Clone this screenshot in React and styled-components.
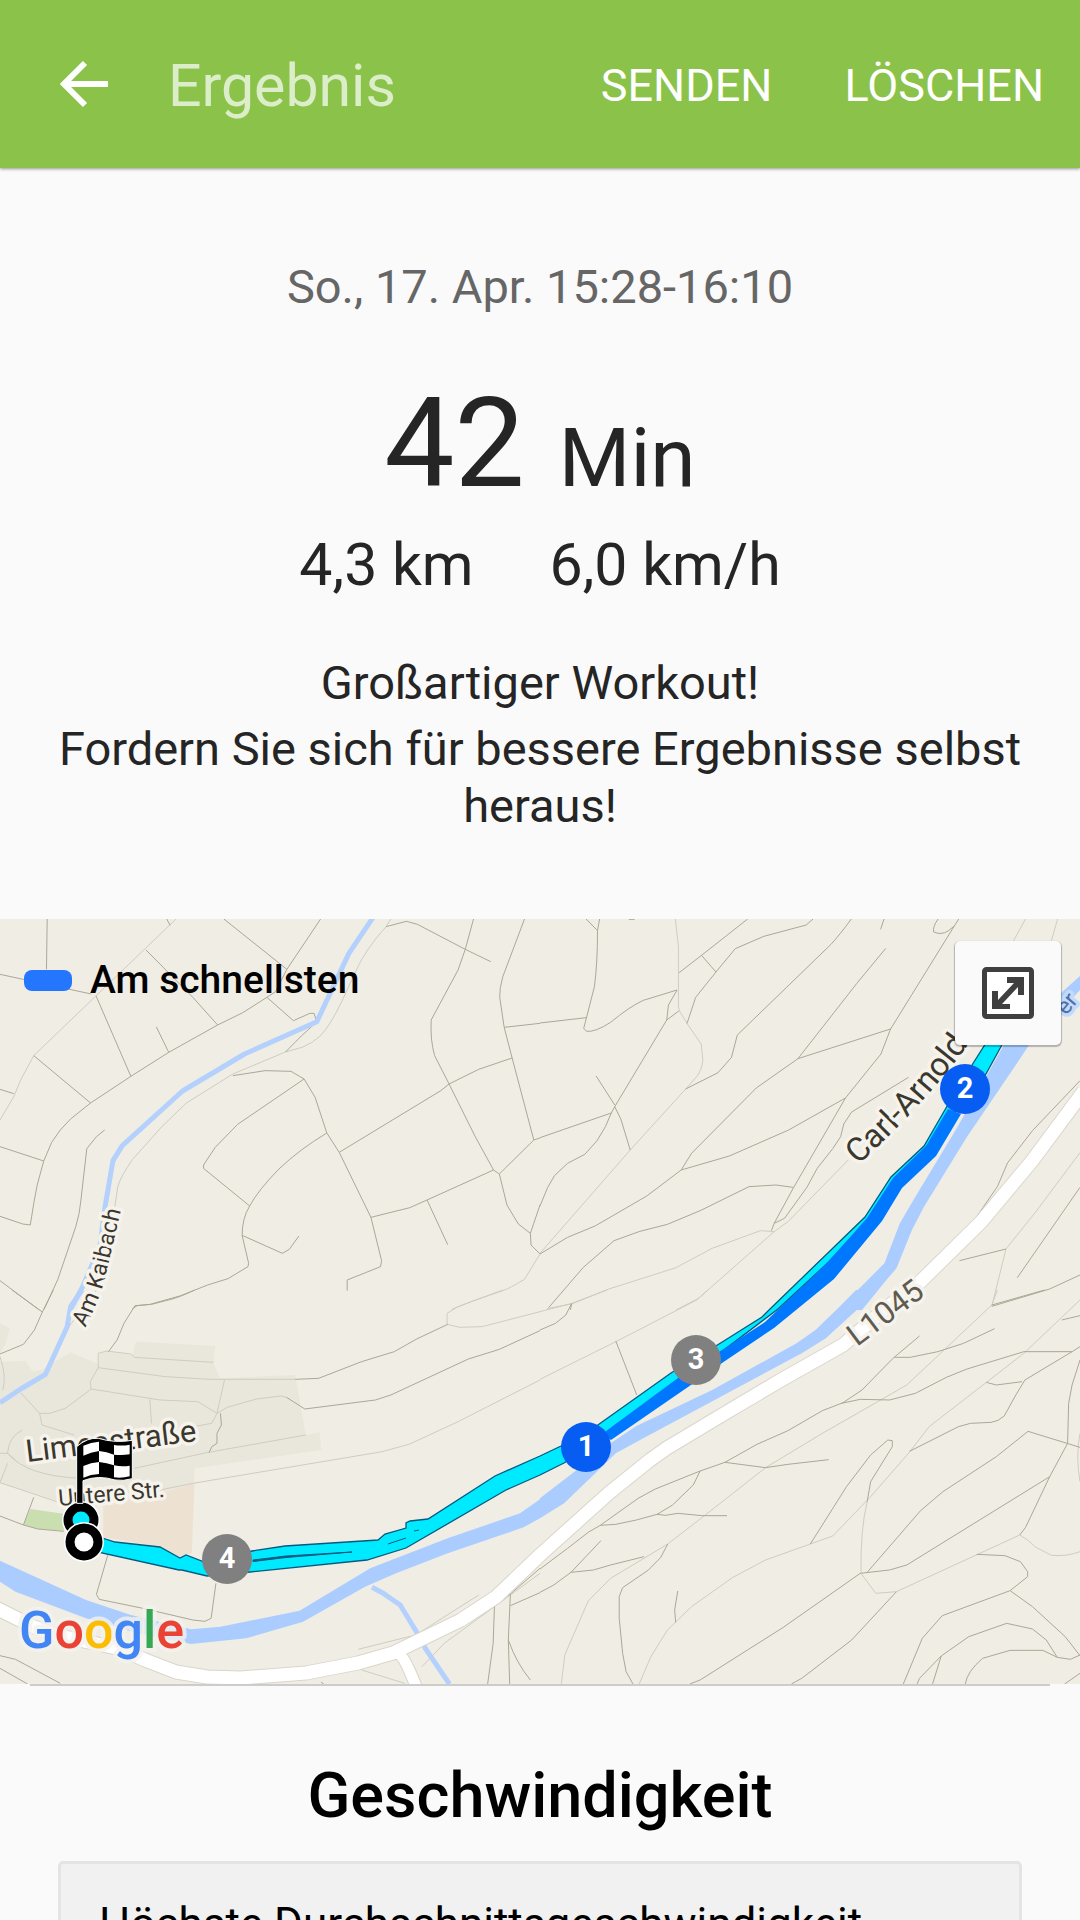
import React from "react";
import styled, { createGlobalStyle } from "styled-components";

const GlobalStyle = createGlobalStyle`
  *, *::before, *::after { box-sizing: border-box; }
  body {
    margin: 0;
    background: #fafafa;
    color: #252525;
    font-family: Roboto, "Noto Sans", sans-serif;
  }
  h1, h2, p { margin: 0; font-weight: 400; }
  button {
    border: 0;
    padding: 0;
    background: none;
    color: inherit;
    font: inherit;
    cursor: pointer;
  }
`;

const Screen = styled.div`
  display: flex;
  flex-direction: column;
  height: 100vh;
  overflow: hidden;
`;

const AppBar = styled.header`
  position: relative;
  display: flex;
  flex: none;
  align-items: center;
  height: 168px;
  padding: 4px 36px 0 56px;
  background: #8bc34a;
  color: #fff;
  box-shadow: 0 1px 3px rgba(0, 0, 0, 0.4);
`;

const BackButton = styled.button`
  display: flex;
  margin-right: 56px;
`;

const Title = styled.h1`
  flex: 1;
  font-size: 59px;
  line-height: 70px;
  color: rgba(255, 255, 255, 0.7);
`;

const Actions = styled.div`
  display: flex;
  gap: 72px;
`;

const Action = styled.button`
  font-size: 45px;
  line-height: 54px;
`;

const Summary = styled.section`
  display: flex;
  flex: none;
  flex-direction: column;
  align-items: center;
  padding: 90px 48px 85px;
  text-align: center;
`;

const WorkoutDate = styled.p`
  font-size: 47px;
  line-height: 57px;
  color: #666;
`;

const Duration = styled.p`
  display: flex;
  align-items: baseline;
  gap: 34px;
  margin-top: 55px;
  font-size: 125px;
  line-height: 148px;
`;

const Unit = styled.span`
  font-size: 82px;
  line-height: 96px;
`;

const Stats = styled.div`
  display: flex;
  gap: 76px;
  margin-top: 12px;
  font-size: 59px;
  line-height: 70px;
`;

const Message = styled.div`
  display: flex;
  flex-direction: column;
  gap: 9px;
  margin-top: 54px;
  font-size: 47px;
  line-height: 57px;
`;

const MapPanel = styled.section`
  position: relative;
  flex: none;
`;

const MapDrawing = styled.svg`
  display: block;
  width: 100%;
  height: auto;
  font-family: Roboto, "Noto Sans", sans-serif;
`;

const Legend = styled.div`
  position: absolute;
  top: 38px;
  left: 24px;
  display: flex;
  align-items: center;
  gap: 18px;
  color: #000;
  font-size: 39px;
  font-weight: 500;
  line-height: 46px;
`;

const Swatch = styled.span`
  width: 48px;
  height: 21px;
  border-radius: 8px;
  background: #2476ff;
`;

const ExpandButton = styled.button`
  position: absolute;
  top: 22px;
  right: 19px;
  display: grid;
  place-items: center;
  width: 106px;
  height: 104px;
  border-radius: 5px;
  background: #fafafa;
  box-shadow: 0 1px 1px 1px rgba(0, 0, 0, 0.25);
`;

const Divider = styled.hr`
  flex: none;
  height: 2px;
  margin: 0 30px;
  border: 0;
  background: #ccc;
`;

const SpeedSection = styled.section`
  display: flex;
  flex: 1;
  flex-direction: column;
  padding: 74px 58px 0;
  color: #000;
`;

const SectionTitle = styled.h2`
  font-size: 63px;
  font-weight: 500;
  line-height: 72px;
  text-align: center;
`;

const Card = styled.div`
  flex: none;
  margin-top: 29px;
  padding: 34px 38px;
  border: 3px solid #e4e4e4;
  border-radius: 5px;
  background: #f1f1f1;
  font-size: 44px;
  line-height: 52px;
`;

const Path = styled.path`
  fill: none;
  stroke: ${(p) => (p.$faint ? "#cfccc1" : "#aba896")};
  stroke-width: 1;
  vector-effect: non-scaling-stroke;
`;

const Stream = styled.path`
  fill: none;
  stroke: #b4d0fc;
  stroke-width: 5;
  stroke-linejoin: round;
  vector-effect: non-scaling-stroke;
`;

const MapLabel = styled.text`
  fill: ${(p) => p.$color || "#3a372f"};
  font-size: ${(p) => p.$size}px;
  paint-order: stroke;
  stroke: ${(p) => p.$halo || "#f6f3ec"};
  stroke-width: 7;
  stroke-linejoin: round;
`;

const PinLabel = styled.text`
  fill: #fff;
  font-size: 29px;
  font-weight: 700;
  text-anchor: middle;
`;

const LogoText = styled.text`
  font-size: 52px;
  font-weight: 500;
  paint-order: stroke;
  stroke: #f3f1ec;
  stroke-opacity: 0.8;
  stroke-width: 8;
  stroke-linejoin: round;
`;

const TILES = [
  {
    id: "north-west",
    at: "translate(0 -9)",
    paths:
      "M137 27L135 178M0 193L265 252M484 27L494 46M650 27L833 178M931 27L833 178L800 245L775 262L705 308L632 345L490 427L380 499L263 579L205 627L175 660L150 697L127 753L108 825L98 880L88 945L66 942L0 919M424 120L560 262L632 345M279 258L380 499M454 351L490 427M98 437L263 579M0 538L40 551M0 710L127 753M775 262L852 332L900 310L912 310L918 330M918 337L875 378L829 426M676 497L770 482L845 484L883 507L915 562L949 669L985 727L1077 922L1108 1052L1105 1070L1008 1110L1008 1142M883 507L690 643L625 712L591 765L591 775L725 888M949 669Q870 718 810 777Q750 840 725 888Q703 925 703 976L722 1060L720 1070L662 1106L603 1125L525 1157L436 1183L398 1187L384 1197M703 976L820 1030L840 1018L868 978M1121 50L1180 34L1212 43L1351 118L1425 155M1375 27L1351 118L1330 180L1252 330Q1249 390 1262 437L1304 522L1380 680L1433 780L1450 792L1550 690M1523 27L1460 200Q1450 235 1451 262L1464 352L1487 444L1550 690L1568 684M1464 352L1568 340M985 727L1280 542L1304 522L1390 478L1487 444M1077 922L1190 893L1240 870L1433 780M1240 870L1300 1004M1450 792L1472 885L1505 942L1540 970L1568 885M1540 970L1542 1005L1568 1032M304 660L280 680L252 716L235 870Q232 910 220 950L168 1108L128 1198M0 1112L114 1200",
    faint:
      "M511 27L98 437L60 510L40 560L0 630M1135 27L1121 50Q1060 120 1035 180L992 275Q960 345 930 378Q905 400 880 411L829 426L676 492L540 580L470 650L385 748Q350 800 342 830L332 900M1568 1032L1523 1108Q1480 1135 1460 1142L1375 1172L1312 1198",
    stream:
      "M1086 18L1013 130L920 335L710 432L530 543L355 707L328 752L305 890L290 1010L240 1130L205 1198",
  },
  {
    id: "north-east",
    at: "translate(540 -9)",
    paths:
      "M134 27L167 62M173 27L167 62Q167 160 158 230L127 355L135 364Q160 367 205 337Q260 290 300 271L398 240L373 285L368 330L217 590L235 628L262 720M258 28H275M0 339L134 323M368 330L403 303M163 498L217 585M0 683L207 609M217 590L207 609L190 650L165 693L130 733L80 760L42 797L22 833L0 888M603 27L469 136L404 188M469 136L511 186M793 27L773 45L650 79L567 116L511 186L452 262L427 340M904 27Q870 75 845 103L573 375L556 442L517 488L423 537M1004 115L920 220L749 446L1018 357M749 446L628 534L440 730L410 780L550 738L722 660L887 564M410 780L310 858L160 948L80 982L0 1032M999 27L989 58M1156 27Q1140 50 1143 66Q1165 76 1185 63L1203 48M1216 27L1203 48L1018 357L990 432L887 564L735 835L680 940L672 962M1070 502L905 606L882 642L873 680L850 716L805 775L775 832L710 925L680 940M735 832L685 825L607 830L465 902L370 943L290 964L215 992L125 1073L25 1193M92 1182L88 1200M1568 512L1430 662L1358 758L1328 830L1268 920M1218 1052L1353 1017M1568 832L1386 1103M1568 1095L1480 1137L1312 1189",
    faint:
      "M393 27L402 110V290L405 303L430 345L468 402L473 450Q470 480 455 500L423 537L262 720L0 1030M1410 27L1375 92M1503 27L1485 92M895 750L720 935L680 965L640 962L500 1015L395 1073L200 1137L92 1182L20 1196M680 965L570 1065L460 1165L395 1200M1568 728L1440 905L1353 1017L1312 1189",
    river:
      "M865 1200L1000 1060L1045 940L1090 860L1210 655L1350 400L1568 198V240L1420 405L1385 460L1240 680L1115 890L1080 960L1035 1075L1010 1105L935 1200Z",
  },
  {
    id: "south-west",
    at: "translate(0 371)",
    paths:
      "M35 0L123 66M155 0L123 66L100 120L68 163L0 192M565 0Q525 20 500 27L440 43L392 47L360 100L340 150L315 185M857 268L925 265L1050 215L1145 185L1210 147L1300 103M832 322L885 357L1090 330L1135 315L1360 207L1450 178L1568 122M0 678L68 705L110 717L185 724M98 622L68 705M313 795L280 913L288 928L415 955L560 990L595 994L613 985L627 880M640 370L643 405L630 430V460L615 470L607 488M0 1097L45 1108L175 1180M0 1135L80 1182M1568 835L1482 912L1436 940L1432 1060L1416 1182M1482 912L1476 1050L1480 1182M1476 1050Q1500 1120 1540 1170M1482 947L1568 908M932 1176l10 8",
    faint:
      "M1460 0L1330 50L1298 70V103L1335 112L1400 110L1568 65M0 200Q20 260 8 300M285 233V190L310 183L380 192L390 202L620 217M285 233L480 260L610 268H857M285 233L262 275L265 297L465 330L575 335L630 370L652 270M265 297L190 355L145 370H115L60 308M115 370L122 405L215 435M435 328L440 400M630 370L660 352L745 327L815 318L832 322M630 370L615 400L550 412M390 535L600 488L888 435M465 600L560 580L1110 485L1190 462L1330 395L1568 270M22 490Q25 440 65 420M0 490H22L45 510M22 520L0 578L165 635M22 490Q80 560 240 565M280 0L200 110L130 253M1390 915L1215 1030M1195 1038L1040 1078M1568 850L1290 1060L1225 1130M1050 1140L1175 1180",
    town:
      "M0 215L75 213L95 245L120 240L205 187L285 222V190L310 183L384 195L395 155L625 168L620 220L638 265L857 255L888 435L928 427L932 480L565 535L563 582L300 650L190 640L0 580ZM0 100L28 115L15 165L0 190Z",
    river:
      "M0 812L250 930L380 975L555 1018L640 1010L870 962L1075 835L1300 745L1510 670L1568 628V685L1520 712L1300 790L1150 850L1060 890L880 995L715 1045L555 1062L400 1030L250 985L45 905L0 875Z",
    stream:
      "M238 0L205 50L195 110L132 253L60 297L0 338M1080 892L1110 908L1162 945L1215 1035L1235 1075L1305 1182",
  },
  {
    id: "south-east",
    at: "translate(540 371)",
    paths:
      "M0 120L45 100L75 75L92 40M220 153L281 315M1102 138L1025 205L935 300L880 338L820 362L720 422L630 463L537 517L465 543L335 597L285 625L175 706L140 727L80 775L0 837M1030 202H1075L1155 185L1230 160L1320 116M1568 170L1545 185H1405L1240 237L1180 262L1090 310L1015 330L930 328L875 340M1545 185L1408 270L1380 318L1348 378Q1330 395 1310 397L1250 400L1215 410L1073 484M1296 277L1325 285L1400 275M1515 90L1568 77M1312 45L1465 0M537 517L655 533L720 523L838 509M465 543L445 585L385 645L340 673L280 690L220 703L175 706M340 673L365 676L400 670L470 677H543M177 752L90 847L40 885L0 907M90 847L155 840L205 825L302 800M371 762L350 803L315 840L240 893L230 920V985L240 1090L250 1145L270 1182M400 903L391 960L394 997M785 762L890 590L960 495L1010 450L1023 452V470L960 575L950 635M1568 210L1545 285L1535 340L1532 460L1480 560L1410 712L1393 735M1568 472L1417 424L1325 500L1170 605L1105 662L950 847M1480 560L1065 825L1015 840L930 850L705 1013L465 1170L435 1182M1268 793L1350 797L1395 815L1416 845V860L1365 902L1168 977L1110 1045L1055 1182M1365 902L1430 950L1525 1040L1568 1097M1095 1182L1102 1165L1165 1098L1245 1040L1355 1000L1430 1017L1470 1050L1502 1102L1460 1081H1365L1285 1105Q1240 1145 1235 1182M1502 1102L1540 1108L1568 1095M1165 1098L1140 1182M1035 905L905 1050L760 1165L730 1182M1523 1182L1568 1150",
    faint:
      "M0 268L230 150L455 30L488 0M0 65L92 40L195 0M1328 0L1312 45L1065 285L820 430L655 533L480 675L371 762L205 865L140 933L72 1095L62 1182M1568 30L1405 190L1130 410L1070 490L960 620L850 738L785 762L655 810L560 862L440 950L370 1020L322 1100L288 1182M950 635Q930 720 932 850L975 910L1035 905L1393 735Q1420 750 1440 772L1485 796Q1530 800 1568 785M1568 430Q1555 500 1568 575",
    river:
      "M0 625L100 545L205 460L280 408L500 300L745 160L800 120L860 60L918 0H972L930 50L830 145L760 190L480 345L300 445L220 490L165 545L70 640L0 685Z",
  },
];

const PINS = [
  { label: "1", x: 586, y: 528, color: "#075cf2" },
  { label: "2", x: 965, y: 170, color: "#075cf2" },
  { label: "3", x: 696, y: 441, color: "#808080" },
  { label: "4", x: 227, y: 640, color: "#808080" },
];

const LOGO = [
  ["G", "#4285f4"],
  ["o", "#ea4335"],
  ["o", "#fbbc05"],
  ["g", "#4285f4"],
  ["l", "#34a853"],
  ["e", "#ea4335"],
];

const TILE_SCALE = "scale(.34439 .33333)";
const ROAD =
  "M1084 172L1032 242L981 303L919 364L884 391L843 426L781 461L722 496L667 529L650 541L609 574L540 636L496 678L461 701L424 719L393 734L358 744L306 754L241 759L207 758L176 753L145 741L121 730L60 717L34 708L-4 689";
const BRANCH = "M398 734Q405 738 417 770";
const TRACK =
  "M93 616L115 623L160 628L180 639L186 636L207 644L252 632L285 627L378 621L385 615L406 609V604L410 602L428 600L495 557L540 537L561 527L595 508L671 454L719 425L762 398L770 390L865 298L891 258L924 227L946 189L972 146L986 124H1003L986 155L946 204L895 266L874 301L778 390L609 518L564 544L540 556L506 571L406 629L367 641L250 653L207 657L182 651H179L93 632Z";
const FASTEST =
  "M602 515L678 459L722 431L765 403L822 349L852 316L867 299L893 259L926 227L948 190L961 195L936 237L902 269L882 302L834 360L774 409L722 444L688 468L611 521Z";

function RouteMap() {
  return (
    <MapDrawing viewBox="0 0 1080 765" role="img" aria-label="Route">
      <defs>
        <path id="kaibach" d="M85 409Q99 382 105 359L123 282" />
        <path id="arnold" d="M858 246Q915 195 962 134L995 88" />
      </defs>
      <rect width="1080" height="765" fill="#f0ede5" />

      {TILES.map((t) => (
        <g key={t.id} transform={`${t.at} ${TILE_SCALE}`}>
          {t.town && <path d={t.town} fill="#e9e6db" />}
          {t.id === "south-west" && (
            <>
              <path d="M300 650L480 605L565 580L557 790L520 800L465 770L300 742Z" fill="#ede2d2" />
              <path d="M88 657L190 672L185 722L110 717L68 705Z" fill="#c9dfaf" />
            </>
          )}
          <Path $faint d={t.faint} />
          <Path d={t.paths} />
          {t.stream && <Stream d={t.stream} />}
          {t.river && <path d={t.river} fill="#aaccff" />}
        </g>
      ))}

      <g fill="none" strokeLinejoin="round">
        <path d={ROAD} stroke="#d9d6cb" strokeWidth="15" />
        <path d={BRANCH} stroke="#d9d6cb" strokeWidth="13" />
        <path d={ROAD} stroke="#fff" strokeWidth="13" />
        <path d={BRANCH} stroke="#fff" strokeWidth="11" />
      </g>

      <MapLabel $size={23}>
        <textPath href="#kaibach">Am Kaibach</textPath>
      </MapLabel>
      <MapLabel $size={33}>
        <textPath href="#arnold">Carl-Arnold-S</textPath>
      </MapLabel>
      <MapLabel $size={31} $color="#5e5b50" transform="translate(857 428) rotate(-37)">
        L1045
      </MapLabel>
      <MapLabel $size={31} transform="translate(27 543) rotate(-7)">
        Limesstraße
      </MapLabel>
      <MapLabel $size={23} transform="translate(59 587) rotate(-5)">
        Untere Str.
      </MapLabel>
      <MapLabel $size={23} $color="#4f6fa5" $halo="#c3dafc" transform="translate(1066 97) rotate(-50)">
        er
      </MapLabel>

      <path d={TRACK} fill="#00eaff" stroke="#065a80" strokeWidth="1.3" />
      <path d={FASTEST} fill="#0077ff" />
      <path
        d="M253 641L286 637L352 633L286 638.500L253 642.500ZM388 625L406 619M414 612L419 611"
        fill="#065a80"
        stroke="#065a80"
      />

      {PINS.map((p) => (
        <g key={p.label} transform={`translate(${p.x} ${p.y})`}>
          <circle r="25" fill={p.color} />
          <PinLabel y="9">{p.label}</PinLabel>
        </g>
      ))}

      <g>
        <circle cx="81" cy="601" r="19" fill="#fff" />
        <circle cx="81" cy="601" r="13" fill="#00eaff" stroke="#000" strokeWidth="9" />
        <g transform="translate(0 481) scale(.33333)">
          <path
            d="M230 140Q262 112 295 115Q345 130 397 121V236Q370 244 345 240Q295 224 249 242V310H230Z"
            fill="#000"
            stroke="#fff"
            strokeWidth="3"
          />
          <path
            d="M250 137Q273 127 297 125V153Q273 157 250 167ZM342 135Q366 139 389 134V163Q366 167 342 164ZM297 153Q320 155 342 164V196Q320 188 297 186ZM250 198Q273 188 297 186V222Q273 223 250 233ZM342 196Q366 201 389 197V229Q366 235 342 232Z"
            fill="#fff"
          />
        </g>
        <circle cx="84" cy="623" r="20" fill="#fff" />
        <circle cx="84" cy="623" r="14" fill="#fff" stroke="#000" strokeWidth="9" />
      </g>

      <LogoText x="19" y="729">
        {LOGO.map(([letter, color], i) => (
          <tspan key={i} fill={color}>
            {letter}
          </tspan>
        ))}
      </LogoText>
    </MapDrawing>
  );
}

function BackIcon() {
  return (
    <svg width="56" height="56" viewBox="0 0 56 56" fill="none" stroke="#fff" strokeWidth="6" aria-hidden="true">
      <path d="M29 5L8 26L29 47M8 26H52" />
    </svg>
  );
}

function ExpandIcon() {
  return (
    <svg width="52" height="52" viewBox="0 0 52 52" aria-hidden="true">
      <rect x="2.5" y="2.5" width="47" height="47" rx="2" fill="#fff" stroke="#3f3f3f" strokeWidth="5" />
      <path
        d="M25 10H42V28H36V20L20 37H28V42H10V24H16V33L32 16H25Z"
        fill="#3f3f3f"
      />
    </svg>
  );
}

export default function App() {
  return (
    <>
      <GlobalStyle />
      <Screen>
        <AppBar>
          <BackButton type="button" aria-label="Zurück">
            <BackIcon />
          </BackButton>
          <Title>Ergebnis</Title>
          <Actions>
            <Action type="button">SENDEN</Action>
            <Action type="button">LÖSCHEN</Action>
          </Actions>
        </AppBar>

        <Summary>
          <WorkoutDate>So., 17. Apr. 15:28-16:10</WorkoutDate>
          <Duration>
            42 <Unit>Min</Unit>
          </Duration>
          <Stats>
            <span>4,3 km</span>
            <span>6,0 km/h</span>
          </Stats>
          <Message>
            <p>Großartiger Workout!</p>
            <p>Fordern Sie sich für bessere Ergebnisse selbst heraus!</p>
          </Message>
        </Summary>

        <MapPanel>
          <RouteMap />
          <Legend>
            <Swatch />
            Am schnellsten
          </Legend>
          <ExpandButton type="button" aria-label="Karte vergrößern">
            <ExpandIcon />
          </ExpandButton>
        </MapPanel>
        <Divider />

        <SpeedSection>
          <SectionTitle>Geschwindigkeit</SectionTitle>
          <Card>Höchste Durchschnittsgeschwindigkeit</Card>
        </SpeedSection>
      </Screen>
    </>
  );
}
